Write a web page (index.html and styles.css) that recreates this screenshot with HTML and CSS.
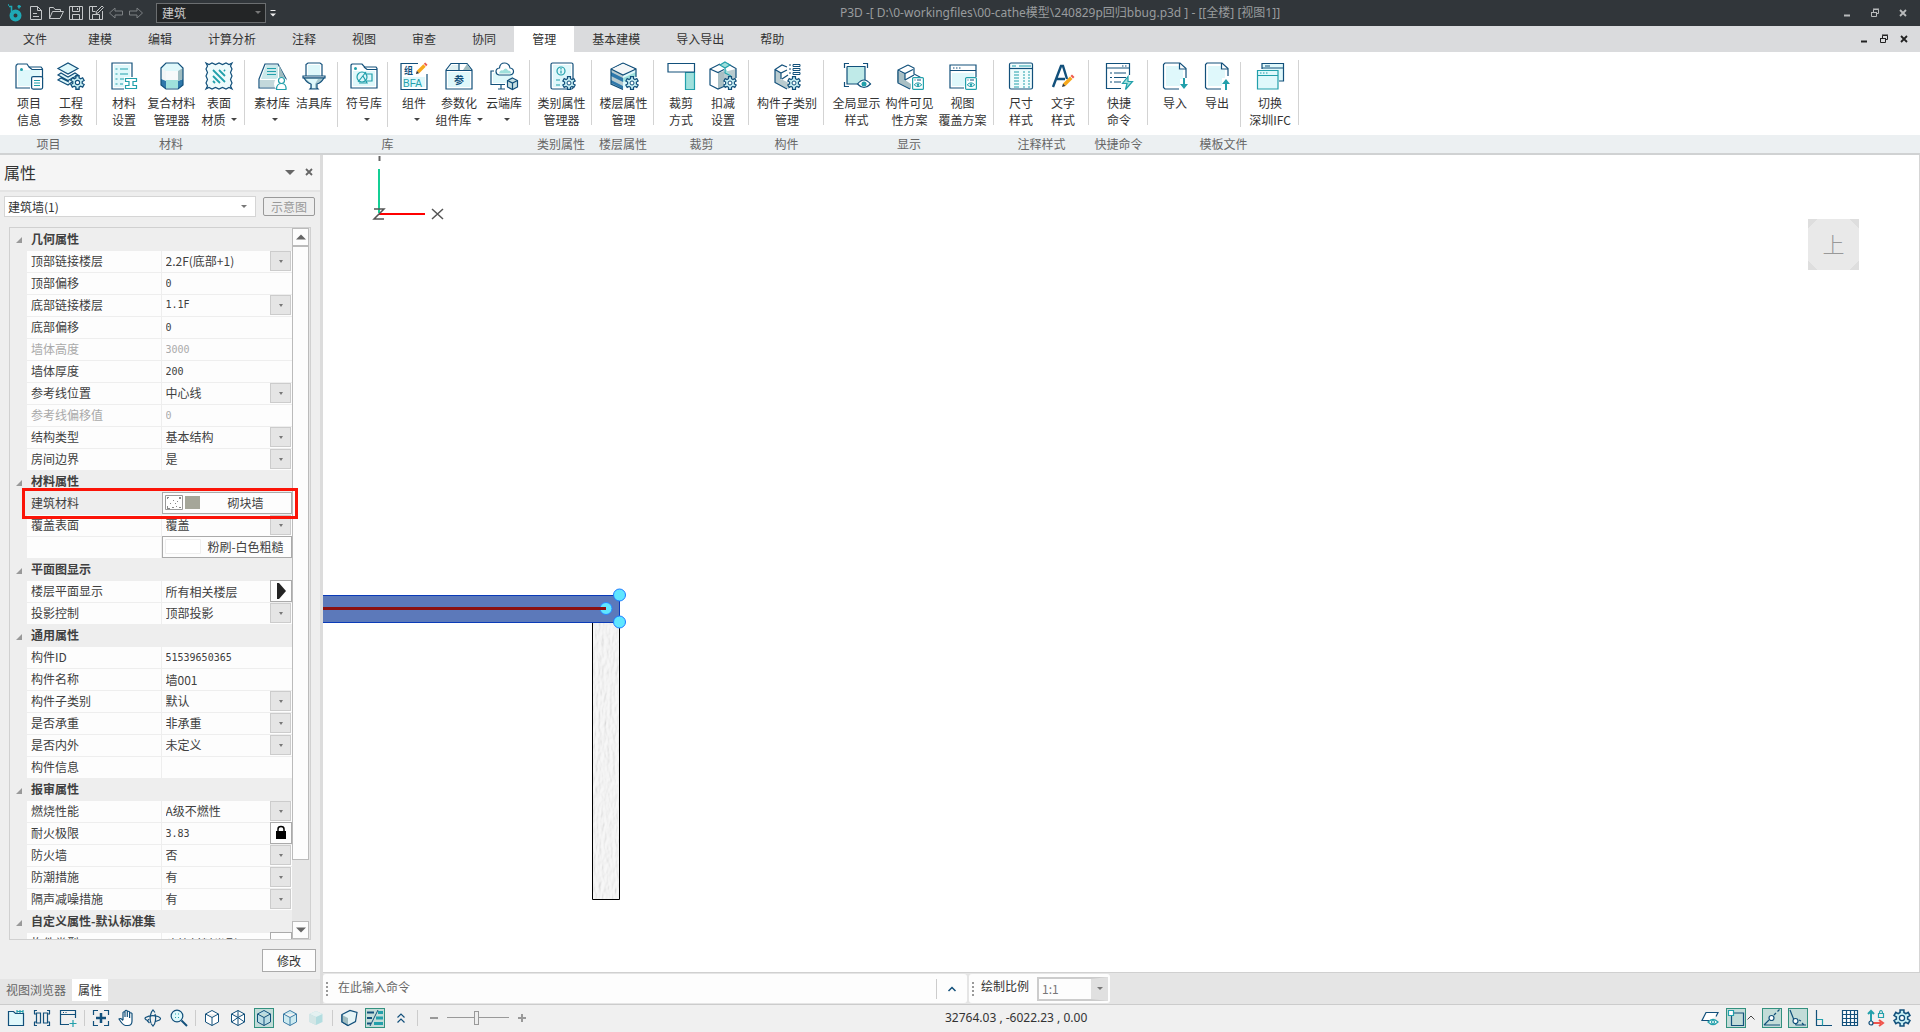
FILE: index.html
```html
<!DOCTYPE html>
<html lang="zh-CN">
<head>
<meta charset="utf-8">
<title>P3D</title>
<link rel="stylesheet" href="styles.css">
</head>
<body>
<svg class="defs" aria-hidden="true">
  <symbol id="gear" viewBox="-7 -7 14 14"><path d="M-1.5-6.3H1.5V-4.3L3-3.4 4.8-4.4 6.2-1.9 4.4-.9V.9L6.2 1.9 4.8 4.4 3 3.4 1.5 4.3V6.3H-1.5V4.3L-3 3.4-4.8 4.4-6.2 1.9-4.4.9V-.9L-6.2-1.9-4.8-4.4-3-3.4-1.5-4.3Z" fill="#c9f0f4" stroke="#12507b" stroke-width="1.2"/><circle r="2" fill="#fff" stroke="#12507b"/></symbol>
  <symbol id="cube" viewBox="0 0 16 18"><path d="M8 1.500 14.500 5v8L8 16.500 1.500 13V5ZM1.500 5 8 8.500 14.500 5M8 8.500v8"/></symbol>
  <symbol id="pencil" viewBox="0 0 14 14"><path d="M2 9.500 9 2.500 11.500 5 4.500 12Z" fill="#f7a81b"/><path d="M2 9.500 4.500 12 1 13Z" fill="#333"/><path d="M9.500 2 11 .5 13.500 3 12 4.500Z" fill="#ee5a4f"/></symbol>
  <symbol id="eyebox" viewBox="0 0 12 13"><rect x=".6" y=".6" width="10.800" height="11.800" rx="1" fill="#fff" stroke="#22a0ab" stroke-width="1.200"/><path d="M2.500 3h1M5 3h4" stroke="#12507b"/><path d="M2.200 7.800Q6 3.800 9.800 7.800 6 11.500 2.200 7.800Z" fill="#fff" stroke="#22a0ab"/><circle cx="6" cy="7.700" r="1.200" fill="#22a0ab"/></symbol>
  <symbol id="min" viewBox="0 0 10 10"><path d="M2 7.500H8" stroke-width="2"/></symbol>
  <symbol id="restore" viewBox="0 0 10 10"><path d="M3.500 4V1.500h5v4H6.500M3 1h6M1.500 4.500h5v4h-5zM1 4.500h6"/></symbol>
  <symbol id="close" viewBox="0 0 10 10"><path d="M2 2 8 8M8 2 2 8" stroke-width="1.800"/></symbol>
</svg>

<header class="titlebar">
  <svg class="logo" viewBox="0 0 16 18"><circle cx="8.500" cy="11.500" r="4" fill="none" stroke="#1fa9b5" stroke-width="4"/><path d="M2 2.500h2.500V8M12 1v3.500M10.500 2.500H14M1 1h1" fill="none" stroke="#1fa9b5" stroke-width="1.600"/></svg>
  <button class="quick" aria-label="新建"><svg viewBox="0 0 16 16"><path d="M2.500 1.500h7l4 4v9h-11zM9.500 1.500v4h4M5 8.500h4M5 11.500h6"/></svg></button>
  <button class="quick" aria-label="打开"><svg viewBox="0 0 16 16"><path d="M1.500 13.500v-11h4l1.500 2h5.500v2M1.500 13.500l3-7h11l-3.500 7z"/></svg></button>
  <button class="quick" aria-label="保存"><svg viewBox="0 0 16 16"><path d="M1.500 1.500h13v13h-13zM4.500 1.500v5h7v-5M4.500 14.500v-5h7v5M9.500 3v2"/></svg></button>
  <button class="quick" aria-label="另存为"><svg viewBox="0 0 16 16"><path d="M9 1.500H1.500v13h13V6M4.500 1.500v5h3M4.500 14.500v-5h7v5M8 8.500l.5-2L14 1l1.500 1.500L10 8z"/></svg></button>
  <button class="quick dim" aria-label="撤销"><svg viewBox="0 0 16 16"><path d="M1.500 8 7 3v3h7.500v4H7v3z"/></svg></button>
  <button class="quick dim" aria-label="重做"><svg viewBox="0 0 16 16"><path d="M14.500 8 9 3v3H1.500v4H9v3z"/></svg></button>
  <span class="select module"><select aria-label="专业"><option>建筑</option></select></span>
  <button class="more" aria-label="自定义"><svg viewBox="0 0 8 10"><path d="M1.500 2.500h5" stroke="#eee"/><path d="M1 5.500h6L4 8.500z" fill="#eee"/></svg></button>
  <h1>P3D -[ D:\0-workingfiles\00-cathe模型\240829p回归bbug.p3d ] - [[全楼] [视图1]]</h1>
  <div class="window-controls">
    <button aria-label="最小化"><svg><use href="#min"/></svg></button>
    <button aria-label="还原"><svg><use href="#restore"/></svg></button>
    <button aria-label="关闭"><svg><use href="#close"/></svg></button>
  </div>
</header>

<nav class="menu">
  <button class="file">文件</button><button>建模</button><button>编辑</button><button>计算分析</button><button>注释</button><button>视图</button><button>审查</button><button>协同</button><button class="active">管理</button><button>基本建模</button><button>导入导出</button><button>帮助</button>
  <div class="window-controls inner">
    <button aria-label="最小化视图"><svg><use href="#min"/></svg></button>
    <button aria-label="还原视图"><svg><use href="#restore"/></svg></button>
    <button aria-label="关闭视图"><svg><use href="#close"/></svg></button>
  </div>
</nav>

<div class="ribbon">
  <section class="group"><div class="tools">
    <button><svg viewBox="0 0 28 28"><path class="d" d="M1 3.500 2.500 2H12l2 3h12l1.500 2v10M1 3.500V26h14" fill="#fff"/><path class="f" d="M3 8h22v8h-9v8H3z"/><path class="d" d="M14 5l3 2.500h10"/><circle cx="6.500" cy="7.500" r="1.500" fill="#22a0ab"/><rect class="d" x="16.600" y="14.600" width="11" height="12.500" rx="1.500" fill="#fff"/><path class="t" d="M19 18.500h6M19 21h6M19 23.500h6"/></svg>项目<br>信息</button>
    <button><svg viewBox="0 0 28 28"><path class="d f" d="M1 6.500 11 1l10 5.500L11 12zM1 13l3-2 7 4 7-4 3 2-10 5.500zM15 20l-4 3-10-5 3-2 8 4"/><use href="#gear" x="13" y="13" width="15" height="15"/></svg>工程<br>参数</button>
  </div><h2>项目</h2></section>
  <section class="group"><div class="tools">
    <button><svg viewBox="0 0 28 28"><path class="d" d="M14 27H2V1h20v14" fill="#fff"/><path class="f" d="M4 3h16v12h-6v10H4z"/><path class="t" d="M5.500 7h2M10 7h8M5.500 12h2M10 12h8M5.500 17h2M10 17h4M5.500 22h2M10 22h3"/><path class="t" d="M15.500 16.500h11v3h-3.500v4h3.500v3h-11v-3h3.500v-4h-3.500z" fill="#fff"/></svg>材料<br>设置</button>
    <button class="w53"><svg viewBox="0 0 28 28"><path d="M3 6 8 1h12l5 5v17l-5 4H8l-5-4z" fill="#dff8fb"/><path d="M3 6 8 9v9l-5 1z" fill="#f2f5f6"/><path d="M3 17l5 2v8l-5-4zM25 17l-5 2v8l5-4z" fill="#2f78ab"/><path d="M25 6l-5 3v10l5-2z" fill="#9fbcc0"/><path d="M8 9h12v10H8z" fill="#f7f9fa"/><path d="M8 18h12v8H8z" fill="#9fe0dc"/><path class="d" d="M3 6 8 1h12l5 5v17l-5 4H8l-5-4z"/></svg>复合材料<br>管理器</button>
    <button><svg viewBox="0 0 28 28"><path class="d" d="M1 1l3 1.500L7 1l3.500 1.500L14 1l3.500 1.500L21 1l3 1.500L27 1l-1.500 3L27 7l-1.500 3.500L27 14l-1.500 3.500L27 21l-1.500 3 1.500 3-3-1.500-3 1.500-3.500-1.500L14 27l-3.500-1.500L7 27l-3-1.500L1 27l1.500-3L1 21l1.500-3.500L1 14l1.500-3.500L1 7l1.500-3z" fill="#effbfc"/><path d="M8 14l7 7M8 8l12 12M14 8l6 6M8 19l2 2M19 8l1 1" stroke="#22a0ab" stroke-width="1.800" fill="none"/></svg>表面<br>材质<i></i></button>
  </div><h2>材料</h2></section>
  <section class="group"><div class="tools">
    <button><svg viewBox="0 0 28 28"><path d="M7 2h13l8 15v9H1v-9z" fill="#fff" class="d"/><path d="M8 3h12v14H3z" fill="#c9e8ea"/><path d="M21 3l6 13-6 1z" fill="#9fbcc0"/><path class="t" d="M9 6.500h9M9 9.500h9M9 12.500h9"/><path d="M2 18h16v7H2z" fill="#c3d8db"/><circle cx="23" cy="22" r="7" fill="#fff"/><circle class="t" cx="23.500" cy="18.500" r="3" fill="#fff"/><path class="t" d="M18.500 27.500q0-6 5-6t4.500 6z" fill="#fff"/></svg>素材库<br><i></i></button>
    <button><svg viewBox="0 0 28 28"><path class="d" d="M6 14V2.500L8 1h12l2 1.500V14" fill="#fff"/><path class="f" d="M8 3h12v11H8z"/><path class="d" d="M3 14h22v2H3z" fill="#fff"/><path class="d" d="M4 16q3 5 7 6v4l-1 1h8l-1-1v-4q4-1 7-6z" fill="#a9c9cf"/><path d="M6 17h12l-3 5v4h-3v-4z" fill="#dff8fb"/></svg>洁具库</button>
    <span class="sep"></span>
    <button><svg viewBox="0 0 28 28"><path class="d" d="M1 3l1-1h10l2.500 3H26l1 1.500V26H1z" fill="#fff"/><path class="f" d="M3 9h22v15H3z"/><path class="d" d="M14 5l3 2.500h10"/><circle cx="5.500" cy="6.500" r="1.500" fill="#22a0ab"/><circle class="t" cx="12" cy="15" r="5"/><path class="t" d="M8 20l8-10M16 12h6v7h-6M9 21h8l-4-7"/></svg>符号库<br><i></i></button>
    <span class="sep"></span>
    <button><svg viewBox="0 0 28 28"><path class="d" d="M18 1.500H1v26h26V12" fill="#fff"/><path d="M3 15h22v10H3z" fill="#dff8fb"/><text x="4" y="12" font-size="9" font-weight="700" fill="#12507b">组</text><text x="3" y="25" font-size="10" font-family="Liberation Sans" fill="#22a0ab">BFA</text><use href="#pencil" x="15" y="0" width="13" height="13"/></svg>组件<br><i></i></button>
    <button class="w48"><svg viewBox="0 0 28 28"><path class="d" d="M1 8 6 1.500h16L27 8v19H1z" fill="#fff"/><path d="M2 8 7 3h7v5z" fill="#dff0f2"/><path d="M22 2l4 6h-8z" fill="#9fbcc0"/><path class="f" d="M3 10h22v15H3z"/><path class="d" d="M1 8.500h26M14 1.500v7"/><text x="9" y="22" font-size="10" font-weight="700" fill="#12507b">参</text></svg>参数化<br>组件库<i></i></button>
    <button><svg viewBox="0 0 28 28"><path class="d" d="M4 9H1v13.500h14M11 23v4M8 27h7" fill="none"/><path class="f" d="M3 11h20v6h-6v4H3z"/><path class="d" d="M9 13q-3-.5-3-3.500T9.500 6q.5-5 5-5t5.500 5q3.500.5 3.500 3.500T20 13z" fill="#fff"/><path d="M9 11.500q1-4 4-3 3-4 5 0 3 0 3 3z" fill="#9fe0dc"/><path class="d" d="M22.500 16l5 2.500V25l-5 2.500-5-2.500v-6.500z" fill="#c9e0e3"/><path class="d" d="M17.500 18.500l5 2.500 5-2.500M22.500 21v6"/></svg>云端库<br><i></i></button>
  </div><h2>库</h2></section>
  <section class="group"><div class="tools">
    <button class="w51"><svg viewBox="0 0 28 28"><rect class="d" x="3" y="1" width="22" height="26" rx="1.500" fill="#fff"/><path class="f" d="M5 3h18v22H5z"/><circle class="t" cx="13" cy="9" r="4"/><path class="t" d="M13 8.500v3M13 6v1.500M8 18h4M8 23h4"/><use href="#gear" x="14" y="14" width="14" height="14"/></svg>类别属性<br>管理器</button>
  </div><h2>类别属性</h2></section>
  <section class="group"><div class="tools">
    <button class="w51"><svg viewBox="0 0 28 28"><path d="M1 7v15l12 6V13z" fill="#b9cbcf"/><path d="M1 10l12 6v4L1 14zM1 18l12 6v3L1 21z" fill="#2f78ab"/><path d="M13 13l13-6v9l-13 11z" fill="#dff8fb"/><path d="M13 16l13-6v4l-13 6z" fill="#9fe0dc"/><path class="d" d="M13 1l13 6v8M13 1 1 7v15l12 5.500"/><path d="M13 2l11 5-11 5.500L2 7z" fill="#f5f7f8"/><path class="d" d="M1 7l12 6 13-6"/><use href="#gear" x="15" y="14" width="14" height="14"/></svg>楼层属性<br>管理</button>
  </div><h2>楼层属性</h2></section>
  <section class="group"><div class="tools">
    <button><svg viewBox="0 0 28 28"><path class="t" d="M18.500 10.500h9v17h-9z" fill="#9fe0dc"/><path class="d" d="M1 1.500h26.500v8.500H1z" fill="#fff"/></svg>裁剪<br>方式</button>
    <button><svg viewBox="0 0 28 28"><path d="M1 7l8 4v16l-8-3z" fill="#fff"/><path d="M9 11l6-2v15l-6 3z" fill="#a9bfc4"/><path d="M15 10l12-3v12H15z" fill="#b9cbcf"/><path class="d" d="M11 2 1 7v16l8 4 7-3M19 2l8 4.500V16M1 7l8 3.500 6-3"/><path class="t" d="M16 0l5 3-5 3-5-3zM16 6v5l6 3" fill="#9fe0dc"/><use href="#gear" x="14" y="14" width="14" height="14"/></svg>扣减<br>设置</button>
  </div><h2>裁剪</h2></section>
  <section class="group"><div class="tools">
    <button class="w64"><svg viewBox="0 0 28 28"><path d="M2 8l6 3v6l8 4v6L2 21z" fill="#b9cbcf"/><path class="d" d="M14 5 9 3 2 7.500v13l12 6.500M9 17l6-4M2 7.500 8 11l6-3M8 11v6" fill="none"/><path d="M16 3h2M16 7h2M16 11h2M20 2.500h7v2h-7zM20 6.500h7v2h-7zM20 10.500h7v2h-7z" stroke="#12507b" fill="none"/><use href="#gear" x="14" y="14" width="14" height="14"/></svg>构件子类别<br>管理</button>
  </div><h2>构件</h2></section>
  <section class="group"><div class="tools">
    <button class="w53"><svg viewBox="0 0 28 28"><path d="M4 4h18v18H4z" fill="#bfeae8"/><path class="d" d="M4 4.500h18V18M4 4.500V22h10M1.500 6V1.500H6M20 1.500h4.500V6M1.500 20v4.500H6"/><path class="d" d="M14.500 22q6.500-8 13 0-6.500 7-13 0z" fill="#fff"/><circle cx="21" cy="22" r="2.500" fill="#22a0ab"/></svg>全局显示<br>样式</button>
    <button class="w53"><svg viewBox="0 0 28 28"><path d="M1 9l8 3v6l6 4v5L1 20z" fill="#a9bfc4"/><path class="d" d="M12 3 2 8v13l12 6M12 3l6 3v6l6 3v2M9 18l9-5M2 8l7 3.500 8-4M9 11.500V18" stroke-width="1" fill="none"/><use href="#eyebox" x="16" y="15" width="12" height="13"/></svg>构件可见<br>性方案</button>
    <button class="w53"><svg viewBox="0 0 28 28"><path class="d" d="M15 26H1V3h26v12" fill="#fff"/><path class="d" d="M1 8.500h26M4 6h1.500M7 6h1.500M10 6h1.500"/><path class="f" d="M3 11h22v4h-9v9H3z"/><use href="#eyebox" x="16" y="15" width="12" height="13"/></svg>视图<br>覆盖方案</button>
  </div><h2>显示</h2></section>
  <section class="group"><div class="tools">
    <button><svg viewBox="0 0 28 28"><rect class="d" x="2.500" y="1" width="23" height="26" rx="1.500" fill="#f1fcfd"/><path class="d" d="M2.500 6.500h23"/><path class="t" d="M5 4h4M12 4h12M7 10h5M7 13h5M7 16h5M7 19h5M7 22h5M7 25h5M16 10h2M21 10h2M16 13h2M21 13h2M16 16h2M21 16h2M16 19h2M21 19h2M16 22h2M21 22h2M16 25h2M21 25h2"/></svg>尺寸<br>样式</button>
    <button><svg viewBox="0 0 28 28"><path d="M4 25 12 4h2l4 13M7 17h9" stroke="#12507b" stroke-width="2.400" fill="none"/><use href="#pencil" x="12" y="12" width="14" height="14"/></svg>文字<br>样式</button>
  </div><h2>注释样式</h2></section>
  <section class="group"><div class="tools">
    <button class="w48"><svg viewBox="0 0 28 28"><path class="d" d="M16 26.500H1.500v-25h23V13" fill="#fff"/><path class="d" d="M1.500 6h23M17 4h1.500M20 4h1.500M5 11h2M9 11h12M5 15.500h2M9 15.500h12M5 20h2M9 20h7"/><path class="t" d="M23 14.500l-5.500 7H22L20.500 27.500l7-8H23z" fill="#9fe0dc"/></svg>快捷<br>命令</button>
  </div><h2>快捷命令</h2></section>
  <section class="group"><div class="tools">
    <button><svg viewBox="0 0 28 28"><path class="d" d="M18 27H4l-1.500-1.500v-23L4 1h15l6 5.500V16" fill="#fff"/><path class="f" d="M5 4h13v4h4v9h-3v7H5z"/><path class="d" d="M18.500 1v6H25"/><path d="M22 16h2v6h3l-4 5-4-5h3z" fill="#22a0ab"/></svg>导入</button>
    <button><svg viewBox="0 0 28 28"><path class="d" d="M18 27H4l-1.500-1.500v-23L4 1h15l6 5.500V14" fill="#fff"/><path class="f" d="M5 4h13v4h4v8h-3v8H5z"/><path class="d" d="M18.500 1v6H25"/><path d="M22 28h2v-6h3l-4-5-4 5h3z" fill="#22a0ab"/></svg>导出</button>
    <span class="sep"></span>
    <button class="w48"><svg viewBox="0 0 28 28"><path class="d" d="M6 7V1.500h21.500V19H23" fill="#dff8fb"/><path class="d" d="M6 6h21M9 4h5"/><path class="t" d="M1.500 8.500H22v18.500H1.500z" fill="#dff8fb"/><path class="t" d="M1.500 13.500H22M4 11h1.500M7 11h1.500M10 11h1.500"/></svg>切换<br>深圳IFC</button>
  </div><h2>模板文件</h2></section>
</div>

<main class="workspace">
  <aside class="panel">
    <div class="panel-head"><h3>属性</h3>
      <button aria-label="面板选项"><svg viewBox="0 0 10 10"><path d="M0 3h10L5 8z" fill="#666"/></svg></button>
      <button aria-label="关闭面板"><svg stroke="#666"><use href="#close"/></svg></button></div>
    <div class="picker"><span class="select object"><select aria-label="对象"><option>建筑墙(1)</option></select></span><button disabled>示意图</button></div>
    <div class="sheet">
      <div class="rows">
      <table>
        <colgroup><col class="c-fold"><col class="c-name"><col></colgroup>
        <tr class="cat"><td></td><th colspan="2">几何属性</th></tr>
        <tr><td></td><th><label for="p1">顶部链接楼层</label></th><td class="dd"><select id="p1"><option>2.2F(底部+1)</option></select></td></tr>
        <tr><td></td><th><label for="p2">顶部偏移</label></th><td><input class="num" id="p2" value="0"></td></tr>
        <tr><td></td><th><label for="p3">底部链接楼层</label></th><td class="dd"><select class="num" id="p3"><option>1.1F</option></select></td></tr>
        <tr><td></td><th><label for="p4">底部偏移</label></th><td><input class="num" id="p4" value="0"></td></tr>
        <tr class="off"><td></td><th><label for="p5">墙体高度</label></th><td><input class="num" id="p5" value="3000" disabled></td></tr>
        <tr><td></td><th><label for="p6">墙体厚度</label></th><td><input class="num" id="p6" value="200"></td></tr>
        <tr><td></td><th><label for="p7">参考线位置</label></th><td class="dd"><select id="p7"><option>中心线</option></select></td></tr>
        <tr class="off"><td></td><th><label for="p8">参考线偏移值</label></th><td><input class="num" id="p8" value="0" disabled></td></tr>
        <tr><td></td><th><label for="p9">结构类型</label></th><td class="dd"><select id="p9"><option>基本结构</option></select></td></tr>
        <tr><td></td><th><label for="p10">房间边界</label></th><td class="dd"><select id="p10"><option>是</option></select></td></tr>
        <tr class="cat"><td></td><th colspan="2">材料属性</th></tr>
        <tr class="picked"><td></td><th>建筑材料</th><td><button class="swatch"><svg viewBox="0 0 36 16"><path d="M.5.5h17v14H.5z" fill="#fff" stroke="#999"/><path d="M2 2h2v1H3v1H2zM14 2h2v2h-2zM8 5h1v1H8zM12 6h1v1h-1zM5 8h1v1H5zM10 8h1v1h-1zM7 12h2v1H7zM11 11h1v1h-1zM2 11h1v2h2v1H2zM14 12h2v1h-2z" fill="#888"/><path d="M20 1h15v13H20z" fill="#a5a699"/></svg><span>砌块墙</span></button></td></tr>
        <tr><td></td><th><label for="p11">覆盖表面</label></th><td class="dd"><select id="p11"><option>覆盖</option></select></td></tr>
        <tr><td></td><th></th><td><button class="swatch"><svg viewBox="0 0 36 16"><path d="M.5.5h35v14H.5z" fill="#fff" stroke="#eee"/></svg><span>粉刷-白色粗糙</span></button></td></tr>
        <tr class="cat"><td></td><th colspan="2">平面图显示</th></tr>
        <tr><td></td><th><label for="p12">楼层平面显示</label></th><td class="act"><input id="p12" value="所有相关楼层"><button aria-label="展开"><svg viewBox="0 0 20 20"><path d="M6 2h2l7 8-7 8H6z" fill="#222"/></svg></button></td></tr>
        <tr><td></td><th><label for="p13">投影控制</label></th><td class="dd"><select id="p13"><option>顶部投影</option></select></td></tr>
        <tr class="cat"><td></td><th colspan="2">通用属性</th></tr>
        <tr><td></td><th><label for="p14">构件ID</label></th><td><input class="num" id="p14" value="51539650365"></td></tr>
        <tr><td></td><th><label for="p15">构件名称</label></th><td><input id="p15" value="墙001"></td></tr>
        <tr><td></td><th><label for="p16">构件子类别</label></th><td class="dd"><select id="p16"><option>默认</option></select></td></tr>
        <tr><td></td><th><label for="p17">是否承重</label></th><td class="dd"><select id="p17"><option>非承重</option></select></td></tr>
        <tr><td></td><th><label for="p18">是否内外</label></th><td class="dd"><select id="p18"><option>未定义</option></select></td></tr>
        <tr><td></td><th><label for="p19">构件信息</label></th><td><input id="p19" value=""></td></tr>
        <tr class="cat"><td></td><th colspan="2">报审属性</th></tr>
        <tr><td></td><th><label for="p20">燃烧性能</label></th><td class="dd"><select id="p20"><option>A级不燃性</option></select></td></tr>
        <tr><td></td><th><label for="p21">耐火极限</label></th><td class="act"><input class="num" id="p21" value="3.83"><button aria-label="锁定"><svg viewBox="0 0 20 20"><path d="M5 8h10v8H5z" fill="#000"/><path d="M7 9V6q0-2.500 3-2.500T13 6v3" fill="none" stroke="#000" stroke-width="1.500"/></svg></button></td></tr>
        <tr><td></td><th><label for="p22">防火墙</label></th><td class="dd"><select id="p22"><option>否</option></select></td></tr>
        <tr><td></td><th><label for="p23">防潮措施</label></th><td class="dd"><select id="p23"><option>有</option></select></td></tr>
        <tr><td></td><th><label for="p24">隔声减噪措施</label></th><td class="dd"><select id="p24"><option>有</option></select></td></tr>
        <tr class="cat"><td></td><th colspan="2">自定义属性-默认标准集</th></tr>
        <tr><td></td><th><label for="p25">构件类型</label></th><td class="act"><input id="p25" value="建筑材料类型"><button aria-label="更多"></button></td></tr>
      </table>
      </div>
      <div class="scroll"><button aria-label="向上"><svg viewBox="0 0 10 10"><path d="M0 7.500h10L5 2.500z" fill="#666"/></svg></button><div class="thumb"></div><div class="track"></div><button aria-label="向下"><svg viewBox="0 0 10 10"><path d="M0 2.500h10L5 7.500z" fill="#666"/></svg></button></div>
    </div>
    <div class="apply"><button>修改</button></div>
    <div class="panel-tabs"><button>视图浏览器</button><button class="active">属性</button></div>
  </aside>

  <div class="stage">
    <div class="canvas">
      <svg class="drawing">
        <filter id="plaster" x="0" y="0" width="1" height="1"><feTurbulence type="fractalNoise" baseFrequency=".35 .12" numOctaves="3" seed="4"/><feDiffuseLighting surfaceScale="1" lighting-color="#fff"><feDistantLight azimuth="200" elevation="68"/></feDiffuseLighting></filter>
        <path d="M56.500 1v5" stroke="#666" stroke-width="2"/>
        <path d="M56 14v44" stroke="#14cf95" stroke-width="2"/>
        <path d="M56 59h46" stroke="#f00" stroke-width="2"/>
        <path d="M51 54h10L51 64h10M109 54l11 10M120 54l-11 10" stroke="#555" stroke-width="1.500" fill="none"/>
        <rect x="269" y="468" width="28" height="276" fill="#ededed"/>
        <rect x="269" y="468" width="28" height="276" filter="url(#plaster)" opacity=".6"/>
        <path d="M269.500 468v276.500h27V468" fill="none" stroke="#000"/>
        <rect x="-2" y="440.500" width="298.500" height="27" fill="#5c79ba" stroke="#0a3bb8"/>
        <circle cx="283" cy="453.500" r="6" fill="#5fe6ff" stroke="#2a86ff"/>
        <path d="M0 453.500h283" stroke="#8b1010" stroke-width="3"/>
        <circle cx="296.500" cy="440" r="6" fill="#5fe6ff" stroke="#1a7bff"/>
        <circle cx="296.500" cy="467" r="6" fill="#5fe6ff" stroke="#1a7bff"/>
      </svg>
      <button class="viewcube">上</button>
    </div>
    <div class="command">
      <div class="prompt"><span class="grip"></span><input aria-label="命令" placeholder="在此输入命令"><button aria-label="展开命令"><svg viewBox="0 0 10 10"><path d="M1.500 7 5 3.500 8.500 7" fill="none" stroke="#12507b" stroke-width="1.500"/></svg></button></div>
      <div class="scale"><span class="grip"></span><label for="scale">绘制比例</label><span class="select ratio"><select id="scale"><option>1:1</option></select></span></div>
    </div>
  </div>
</main>

<footer class="status">
  <button aria-label="项目"><svg viewBox="0 0 20 20"><path class="d f" d="M2.500 3.500h5l2 2h8v12h-15z"/><path class="t" d="M11 3.500h6M11 2v3M14 2v3M17 2v3"/></svg></button>
  <button aria-label="图层"><svg viewBox="0 0 20 20"><path class="d" d="M5 2.500H2.500V6M15 2.500h2.500V6M5 17.500H2.500V14M15 17.500h2.500V14M4.500 5h4v10h-4zM11.500 5h4v10h-4zM2 6h2M16 6h2M2 14h2M16 14h2"/></svg></button>
  <button aria-label="新窗口"><svg viewBox="0 0 20 20"><path class="d" d="M11 16.500H2.500v-14h15V10M2.500 6.500h15M5 4.500h1M7.500 4.500h1"/><path class="t" d="M15 12v7M11.500 15.500h7"/></svg></button>
  <span class="sep"></span>
  <button aria-label="全图"><svg viewBox="0 0 20 20"><path class="d" d="M7 2.500H2.500V7M13 2.500h4.500V7M7 17.500H2.500V13M13 17.500h4.500V13"/><path d="M10 5v10M5 10h10" stroke="#12507b" stroke-width="2.500"/></svg></button>
  <button aria-label="平移"><svg viewBox="0 0 20 20"><path class="d" d="M6 12V4.500q1-1.500 2 0V9 3q1-1.500 2.300 0v6-5q1-1.500 2.300 0v6-4.500q1.200-1.500 2.400 0V13q0 4.500-4 4.500H8.500Q6 17.500 2 11q1.500-1.500 4 1.500" fill="#fff"/></svg></button>
  <button aria-label="旋转"><svg viewBox="0 0 20 20"><path class="d" d="M8 15Q6 10 8.500 4L10 2l2 2.500M12 6q1.500 5-.5 10L10 18l-2-2.500M4.500 12.500Q1 11 2.500 9.500 8 6.500 15 8.500q4 1.500 1.500 3.500l-4 1.500M6 11l-1.500 2 2 2" fill="none"/></svg></button>
  <button aria-label="缩放"><svg viewBox="0 0 20 20"><circle class="d" cx="8" cy="8" r="5.800" fill="#dff8fb"/><path d="M12.500 12.500 18 18" stroke="#12507b" stroke-width="2"/><path class="t" d="M6 6h1M9 6h1M6 9.500h1M9 9.500h1"/></svg></button>
  <span class="sep"></span>
  <button aria-label="线框"><svg class="cube" viewBox="0 0 16 18"><use href="#cube" fill="#fff"/></svg></button>
  <button aria-label="透明"><svg class="cube" viewBox="0 0 16 18"><use href="#cube" fill="#fff"/><path d="M8 1.500v7M1.500 13 8 8.500l6.500 4.500"/></svg></button>
  <button class="on" aria-label="消隐"><svg class="cube" viewBox="0 0 16 18"><use href="#cube" fill="#b9dce4"/></svg></button>
  <button aria-label="着色"><svg class="cube blue" viewBox="0 0 16 18"><use href="#cube" fill="#cdeaf0"/></svg></button>
  <button aria-label="真实"><svg viewBox="0 0 20 20"><path d="M10 3l6.500 3v8L10 17l-6.500-3V6z" fill="#b3dde0"/><path d="M10 3l6.500 3L10 9 3.500 6z" fill="#e4f1f1"/><path d="M10 9v8l-6.500-3V6z" fill="#d3e6e6"/></svg></button>
  <span class="sep"></span>
  <button aria-label="剖切"><svg viewBox="0 0 20 20"><path class="d" d="M3 6.500 11 2.500l7 2-1.500 9L9 17.500l-6-3.500z" fill="#e6f4f6"/><path d="M3 7l6 3v7l-6-3z" fill="#9fbcc0"/><path class="d" d="M3 6.500V14l6 3.500"/></svg></button>
  <button class="on" aria-label="线宽"><svg viewBox="0 0 20 20"><path d="M2 4.500h7M2 10h5M2 15.500h4" stroke="#12507b" stroke-width="2"/><path d="M5 18 13 2" stroke="#12507b"/><path d="M13 4.500h5M11 10h7M9 15.500h9" stroke="#22a0ab" stroke-width="3"/></svg></button>
  <button aria-label="展开"><svg viewBox="0 0 20 20"><path class="d" d="M6.500 9.500 10 6l3.500 3.500M6.500 14.500 10 11l3.500 3.500"/></svg></button>
  <span class="sep"></span>
  <button aria-label="缩小"><svg viewBox="0 0 20 20"><path d="M6 10h8" stroke="#999" stroke-width="2"/></svg></button>
  <input type="range" aria-label="显示精度" value="48">
  <button aria-label="放大"><svg viewBox="0 0 20 20"><path d="M6 10h8M10 6v8" stroke="#999" stroke-width="2"/></svg></button>
  <output>32764.03 , -6022.23 , 0.00</output>
  <button aria-label="可见性"><svg viewBox="0 0 20 20"><path class="d" d="M9 12.500H2L6 4.500h12l-2 4" fill="#fff"/><path class="t" d="M8 14q5-5 10 0-5 5-10 0z" fill="#fff"/><circle class="t" cx="13" cy="14" r="1.500"/></svg></button>
  <button class="on" aria-label="捕捉"><svg viewBox="0 0 20 20"><path class="d" d="M8 5h9.500v12.500h-12V8"/><path class="t" d="M2.500 2.500h5v5h-5z" fill="#fff"/></svg></button>
  <button class="tiny" aria-label="捕捉设置"><svg viewBox="0 0 10 20"><path d="M1.500 11.500 5 8l3.500 3.500" fill="none" stroke="#444"/></svg></button>
  <button class="on" aria-label="极轴"><svg viewBox="0 0 20 20"><path class="d" d="M2 17h16M2 17l5-5M12 7l2-2M15.500 3.500l2-2"/><circle class="d" cx="9.500" cy="10" r="2.500" fill="#fff"/></svg></button>
  <button class="on" aria-label="角度"><svg viewBox="0 0 20 20"><path class="d" d="M2 2l6 15h10M11 12l2 1M14 15l2 2"/><circle class="d" cx="7.500" cy="13" r="2.500" fill="#fff"/></svg></button>
  <button aria-label="正交"><svg viewBox="0 0 20 20"><path class="d" d="M2.500 2v15.500H18"/><path class="t" d="M3 11.500h5.500v6"/></svg></button>
  <button aria-label="网格"><svg viewBox="0 0 20 20"><path class="d" d="M2.500 2.500h15v15h-15zM6.500 2.500v15M10.500 2.500v15M14.500 2.500v15M2.500 6.500h15M2.500 10.500h15M2.500 14.500h15" fill="#fff"/></svg></button>
  <button aria-label="坐标锁定"><svg viewBox="0 0 20 20"><path d="M5 13V4M2 6l3-3 3 3" fill="none" stroke="#22a0ab" stroke-width="2"/><path d="M7 15h8M13 12l4 3-4 3" fill="none" stroke="#f0544c" stroke-width="2"/><circle class="d" cx="5" cy="15" r="2"/><path class="t" d="M12.500 5.500h5v4h-5zM13.500 5.500q0-3 1.500-3t1.500 3"/></svg></button>
  <button aria-label="设置"><svg viewBox="0 0 20 20"><use href="#gear" x="1" y="1" width="18" height="18"/></svg></button>
</footer>
</body>
</html>
```

FILE: styles.css
```css
*, *::before, *::after { box-sizing: border-box; }

body {
  margin: 0;
  height: 100vh;
  display: flex;
  flex-direction: column;
  overflow: hidden;
  background: #fff;
  color: #333;
  font: 12px/16px "Noto Sans CJK SC", sans-serif;
}

button, select, input {
  margin: 0;
  padding: 0;
  border: 0;
  border-radius: 0;
  background: none;
  color: inherit;
  font: inherit;
  outline: 0;
}

h1, h2, h3 { margin: 0; font-size: 12px; font-weight: 400; }
svg { display: block; fill: none; }
.defs { position: absolute; width: 0; height: 0; }
.d { stroke: #12507b; stroke-width: 1.2; }
.t { stroke: #22a0ab; stroke-width: 1.2; }
.f { fill: #dff8fb; }

/* Drop-downs */
.select { position: relative; display: flex; }
.select select { appearance: none; flex: 1; min-width: 0; }
.select::after {
  content: "";
  position: absolute;
  right: 8px;
  top: 50%;
  margin-top: -2px;
  border: 3px solid transparent;
  border-top-color: #777;
  border-bottom: 0;
}

/* Title bar */
.titlebar {
  display: flex;
  align-items: center;
  height: 26px;
  padding-left: 7px;
  background: #31363a;
}
.logo { width: 16px; height: 18px; margin-right: 3px; }
.quick { width: 20px; height: 20px; padding: 2px; stroke: #c4c7c9; }
.quick.dim { stroke: #7c8083; }
.module {
  width: 110px;
  height: 20px;
  margin-left: 10px;
  border: 1px solid #6b6e70;
  background: #232526;
  color: #ccc;
}
.module select { padding-left: 5px; }
.module::after { right: 4px; }
.more { width: 12px; margin-left: 1px; }
.more svg { width: 8px; height: 10px; margin: 0 auto; }
.titlebar h1 {
  flex: 1;
  padding-left: 12px;
  color: #999c9e;
  font-family: "Noto Sans", "Noto Sans CJK SC", sans-serif;
  text-align: center;
}
.window-controls { display: flex; padding-right: 7px; stroke: #b9bbbc; }
.window-controls button { width: 20px; margin-left: 8px; }
.window-controls svg { width: 10px; height: 10px; margin: 0 auto; }

/* Menu */
.menu { display: flex; height: 26px; background: #dadbdd; }
.menu > button { padding: 0 18px; }
.menu > .file { padding: 0 23px; }
.menu > .active { background: #fff; }
.menu .inner { margin-left: auto; align-items: center; padding-right: 6px; stroke: #222; }
.menu .inner button { margin: 0; }

/* Ribbon */
.ribbon { display: flex; border-bottom: 2px solid #d0d2d3; background: linear-gradient(#fff 83px, #ecf0f2 83px); }
.group { display: flex; flex-direction: column; }
.group:first-child .tools { padding-left: 8px; }
.tools { position: relative; display: flex; height: 83px; padding: 10px 5px 0 6px; }
.tools::after {
  content: "";
  position: absolute;
  right: 0;
  top: 8px;
  width: 1px;
  height: 65px;
  background: #d3d3d3;
}
.tools button {
  display: flow-root;
  align-self: flex-start;
  width: 42px;
  line-height: 17px;
  text-align: center;
  white-space: nowrap;
}
.tools button > svg { width: 28px; height: 28px; margin: 0 auto 4px; overflow: visible; }
.tools .w48 { width: 48px; }
.tools .w51 { width: 51px; }
.tools .w53 { width: 53px; }
.tools .w64 { width: 64px; }
.tools i {
  display: inline-block;
  margin-left: 5px;
  border: 3px solid transparent;
  border-top-color: #444;
  border-bottom: 0;
  vertical-align: 4px;
}
.tools .sep { width: 1px; height: 65px; margin: 0 5px 0 2px; background: #d3d3d3; }
.group h2 { height: 18px; line-height: 18px; color: #666; text-align: center; }

/* Workspace */
.workspace { flex: 1; display: flex; min-height: 0; }
.panel {
  display: flex;
  flex-direction: column;
  width: 323px;
  border-right: 3px solid #dcdcdc;
  background: #eee;
}
.panel-head {
  display: flex;
  align-items: center;
  gap: 5px;
  height: 37px;
  padding: 0 4px 2px;
  border-bottom: 2px solid #e4e4e4;
  background: #f5f5f5;
}
.panel-head h3 { flex: 1; font-size: 16px; }
.panel-head button { width: 14px; height: 14px; padding: 2px; }
.panel-head svg { width: 10px; height: 10px; }
.picker { display: flex; gap: 7px; padding: 4px 5px 0 4px; }
.object { flex: 1; height: 21px; border: 1px solid #d5d5d5; background: #fff; }
.object select { padding-left: 3px; }
.picker button { width: 52px; height: 19px; margin-top: 1px; border: 1px solid #999; border-radius: 2px; color: #999; line-height: 17px; }

.sheet {
  flex: 1;
  display: flex;
  min-height: 0;
  margin: 10px 9px 0;
  border: 1px solid #d0d0d0;
}
.rows { flex: 1; overflow-x: visible; overflow-y: clip; }
.rows table { width: 100%; border-collapse: collapse; table-layout: fixed; color: #404040; }
.c-fold { width: 17px; }
.c-name { width: 134px; }
.rows tr { height: 22px; }
.rows td, .rows th {
  position: relative;
  height: 22px;
  padding: 0;
  border-bottom: 1px solid #eee;
  background: #fdfdfd;
  font-weight: 400;
  line-height: 20px;
  text-align: left;
  white-space: nowrap;
}
.rows td:first-child { background: #eee; }
.rows th { padding-left: 4px; border-right: 1px solid #eee; }
.rows .cat td, .rows .cat th { background: #eee; font-weight: 700; }
.cat td::after {
  content: "";
  position: absolute;
  right: 5px;
  top: 9px;
  border: 3px solid #999;
  border-top-color: transparent;
  border-left-color: transparent;
}
.rows input, .rows select {
  display: block;
  appearance: none;
  width: 100%;
  height: 21px;
  padding-left: 4px;
  line-height: 20px;
}
.rows .num { font-family: "DejaVu Sans Mono", monospace; font-size: 10px; }
.off, .off input { color: #aaa; }
.dd::before {
  content: "";
  position: absolute;
  right: 1px;
  top: 0;
  width: 21px;
  height: 20px;
  border: 1px solid #ccc;
  background: #e5e5e5;
}
.dd::after {
  content: "";
  position: absolute;
  right: 9px;
  top: 9px;
  border: 2px solid transparent;
  border-top: 3px solid #777;
  border-bottom: 0;
}
.rows .act { padding-right: 22px; }
.act button {
  position: absolute;
  right: 0;
  top: -1px;
  width: 22px;
  height: 22px;
  border: 1px solid #aaa;
  background: #fdfdfd;
}
.swatch {
  display: flex;
  align-items: center;
  width: 100%;
  height: 22px;
  margin-top: -1px;
  padding-left: 2px;
  border: 1px solid #aaa;
  background: #fdfdfd;
}
.swatch svg { width: 36px; height: 16px; }
.swatch span { flex: 1; text-align: center; }
.rows .picked th { background: #eee; }
.picked td:first-child::after {
  content: "";
  position: absolute;
  z-index: 2;
  left: 12px;
  top: -5px;
  width: 276px;
  height: 31px;
  border: 3px solid #fb1408;
}

.scroll { display: flex; flex-direction: column; width: 18px; padding-right: 1px; background: #e6e6e6; }
.scroll button { height: 18px; border: 1px solid #bbb; background: #fdfdfd; }
.scroll svg { width: 10px; height: 10px; margin: 0 auto; }
.thumb { flex: 91; border: 1px solid #bbb; background: #fdfdfd; }
.track { flex: 9; }

.apply { display: flex; justify-content: flex-end; padding: 9px 4px 7px; }
.apply button { width: 54px; height: 23px; border: 1px solid #aaa; background: #fdfdfd; }
.panel-tabs { display: flex; height: 25px; padding-bottom: 3px; background: #e5e5e5; color: #666; }
.panel-tabs button { padding: 0 6px; }
.panel-tabs .active { background: #fff; color: #333; }

.stage { flex: 1; display: flex; flex-direction: column; min-width: 0; }
.canvas { position: relative; flex: 1; border-right: 1px solid #d5d5d5; background: #fff; }
.drawing { position: absolute; width: 100%; height: 100%; }
.viewcube {
  position: absolute;
  right: 60px;
  top: 64px;
  width: 51px;
  height: 51px;
  padding-bottom: 4px;
  background:
    linear-gradient(135deg, #dedede 7px, transparent 7px),
    linear-gradient(225deg, #dedede 7px, transparent 7px),
    linear-gradient(45deg, #dedede 7px, transparent 7px),
    linear-gradient(315deg, #dedede 7px, transparent 7px),
    #e9e9e9;
  color: #999;
  font-size: 22px;
  font-weight: 300;
}
.command { display: flex; gap: 2px; height: 32px; padding: 1px 0; border-top: 1px solid #d0d0d0; background: #e5e5e5; }
.prompt, .scale { display: flex; align-items: center; border-radius: 3px; background: #fdfdfd; }
.prompt { width: 644px; }
.prompt input { flex: 1; margin: 0 0 3px 10px; color: #666; }
.prompt input::placeholder { color: #666; opacity: 1; }
.prompt button { width: 31px; height: 20px; border-left: 1px solid #ccc; }
.prompt button svg { width: 10px; height: 10px; margin: 0 auto; }
.grip { width: 2px; height: 14px; margin-left: 3px; background: repeating-linear-gradient(#999 0 2px, transparent 2px 4px); }
.scale { padding-right: 2px; }
.scale label { margin: 0 8px 6px 7px; }
.ratio { width: 71px; height: 24px; border: 2px solid #ccc; border-right: 17px solid #e0e0e0; color: #777; }
.ratio select { padding-left: 3px; }
.ratio::after { right: -12px; }

/* Status bar */
.status {
  display: flex;
  align-items: center;
  height: 28px;
  padding: 0 5px 2px 3px;
  border-top: 1px solid #ccc;
  background: #f0f0f0;
}
.status button { width: 20px; height: 20px; margin: 0 3px; flex: none; }
.status svg { width: 20px; height: 20px; }
.status .on { background: #c2dcd8; outline: 1px solid #33917f; outline-offset: -1px; }
.status .cube { width: 16px; height: 18px; margin: 0 auto; stroke: #12507b; }
.status .blue { stroke: #3d7ca6; }
.status .sep { width: 1px; height: 16px; margin: 0 3px; background: #ccc; }
.status .tiny { width: 10px; margin: 0 3px 0 -3px; }
.status .tiny svg { width: 10px; }
.status input { appearance: none; width: 62px; height: 14px; margin: 0; background: linear-gradient(#999, #999) 0 50% / 100% 1px no-repeat; }
.status input::-webkit-slider-thumb { appearance: none; width: 5px; height: 14px; border: 1px solid #999; background: #eee; }
.status output { flex: 1; padding-left: 410px; font-family: "Noto Sans", sans-serif; }
```
